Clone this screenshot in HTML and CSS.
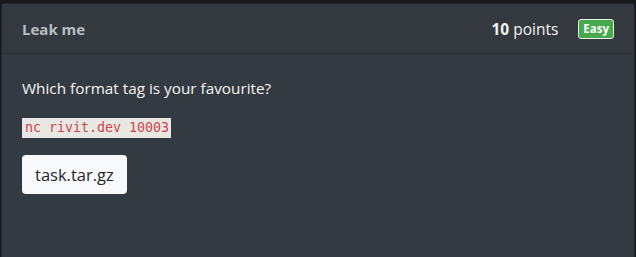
FILE: index.html
```html
<!DOCTYPE html>
<html>
<head>
<meta charset="utf-8">
<link rel="stylesheet" href="styles.css">
</head>
<body>
<div class="card">
  <div class="card-header">
    <span class="title">Leak me</span>
    <div class="meta">
      <span class="points"><b>10</b> points</span>
      <span class="badge">Easy</span>
    </div>
  </div>
  <div class="card-body">
    <p class="desc">Which format tag is your favourite?</p>
    <p class="cmd"><code>nc rivit.dev 10003</code></p>
    <a class="file-btn">task.tar.gz</a>
  </div>
</div>
</body>
</html>
```
FILE: styles.css
```css
html, body {
  margin: 0;
  padding: 0;
  background: #17191c;
  height: 100%;
  overflow: hidden;
}
body {
  padding: 3px 1px 0 1px;
  box-sizing: border-box;
  font-family: "Open Sans", "Segoe UI", sans-serif;
}
.card {
  background: #343a41;
  border: 1px solid #23272b;
  border-bottom: none;
  border-radius: 5px 5px 0 0;
  height: 100%;
  box-sizing: border-box;
}
.card-header {
  display: flex;
  align-items: center;
  justify-content: space-between;
  height: 49px;
  padding: 0 20px;
  border-bottom: 1px solid #2c3136;
  background: #33393f;
}
.title {
  font-weight: 700;
  font-size: 15px;
  color: #b9bec4;
}
.meta {
  display: flex;
  align-items: center;
  gap: 20px;
}
.points {
  color: #f2f2f2;
  font-size: 15.5px;
}
.points b { font-weight: 700; }
.badge {
  background: #46a94c;
  color: #fff;
  border: 1px solid #e8f3e8;
  border-radius: 3px;
  font-size: 11.5px;
  font-weight: 700;
  padding: 1px 4px 2px;
  line-height: 15px;
}
.card-body {
  padding: 20px 20px;
}
.desc {
  margin: 3px 0 0;
  color: #f4f4f4;
  font-size: 15.3px;
  line-height: 22px;
}
.cmd {
  margin: 17px 0 0;
  line-height: 20px;
}
.cmd code {
  background: #e8e8e3;
  color: #d0434e;
  font-family: "DejaVu Sans Mono", monospace;
  font-size: 13.3px;
  padding: 2px 2px 3px 3px;
}
.file-btn {
  display: inline-block;
  margin-top: 17px;
  background: #f8f9fa;
  color: #24272a;
  border-radius: 4px;
  font-size: 16.5px;
  padding: 9px 13px 9px;
  line-height: 21px;
}
```
